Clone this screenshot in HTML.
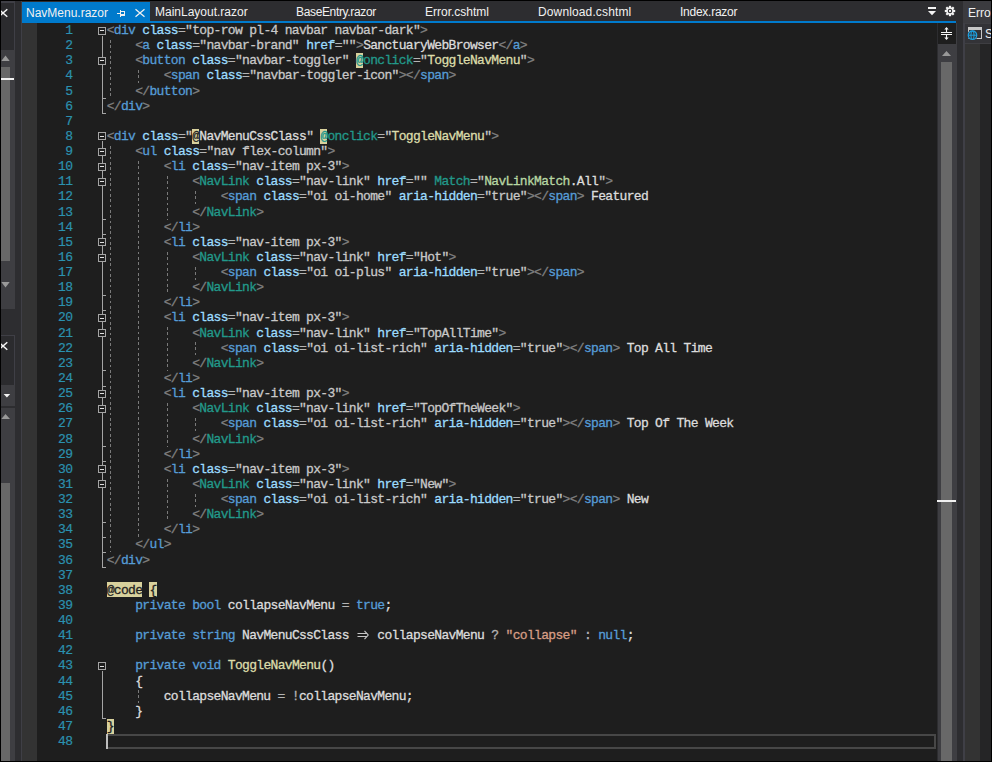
<!DOCTYPE html>
<html><head><meta charset="utf-8">
<style>
*{margin:0;padding:0;box-sizing:border-box}
html,body{width:992px;height:762px;overflow:hidden;background:#000}
body{position:relative;font-family:"Liberation Sans",sans-serif}
.abs{position:absolute}
/* left strip */
#lstrip{position:absolute;left:1px;top:1px;width:21px;height:760px;background:#2d2d30}
#lline{position:absolute;left:21px;top:1px;width:1px;height:760px;background:#3f3f46}
/* tab well */
#tabwell{position:absolute;left:22px;top:1px;width:941px;height:22px;background:#2d2d30}
#tabline{position:absolute;left:22px;top:21px;width:934px;height:2px;background:#007acc}
#acttab{position:absolute;left:22px;top:2px;width:128px;height:21px;background:#007acc}
.tab{position:absolute;top:5px;font-size:12px;color:#f1f1f1;white-space:pre;line-height:14px}
/* editor */
#margin{position:absolute;left:22px;top:23px;width:15px;height:738px;background:#333333}
#editor{position:absolute;left:37px;top:23px;width:900px;height:738px;background:#1e1e1e}
#vscroll{position:absolute;left:937px;top:23px;width:20px;height:738px;background:#3e3e42}
#rstrip{position:absolute;left:957px;top:1px;width:6px;height:760px;background:#2d2d30}
.num{-webkit-text-stroke:0.2px;position:absolute;left:37px;width:35.3px;text-align:right;font-family:"Liberation Mono",monospace;font-size:13.0px;letter-spacing:-0.680px;line-height:15.13px;height:15.13px;color:#2b91af;white-space:pre}
.ln{-webkit-text-stroke:0.3px;position:absolute;left:106.7px;font-family:"Liberation Mono",monospace;font-size:13.0px;letter-spacing:-0.680px;line-height:15.13px;height:15.13px;color:#dcdcdc;white-space:pre}
.d{color:#808080}.e{color:#569cd6}.a{color:#9cdcfe}.o{color:#b4b4b4}.v{color:#c8c8c8}.t{color:#dcdcdc}
.c{color:#22998a}.m{color:#dcdcaa}.n{color:#b8d7a3}.k{color:#569cd6}.s{color:#d69d85}
.ra{color:#15958c}.rb{color:#1e1e1e}
.yb{position:absolute;height:15px;background:#d8d19c}
.arr{position:relative;display:inline-block}
.ob{position:absolute;left:98px;width:8px;height:8px;border:1px solid #a5a5a5;background:#1e1e1e}
.ob i{position:absolute;left:1px;top:3px;width:4px;height:1px;background:#e0e0e0}
.ov{position:absolute;left:102px;width:1px;background:#a5a5a5}
.ot{position:absolute;left:102px;width:4px;height:1px;background:#a5a5a5}
.gd{position:absolute;width:1px;background:repeating-linear-gradient(to bottom,#7a7a7a 0,#7a7a7a 2.7px,transparent 2.7px,transparent 5.33px)}
#curline{position:absolute;left:106px;top:734px;width:830px;height:15px;border:2px solid #474747}
</style></head><body>
<div id="lstrip"></div>
<div id="lline"></div>
<!-- left panels -->
<div class="abs" style="left:1px;top:1px;width:14px;height:49px;background:#2b2b2e;border-top:2px solid #3f3f46;border-right:1px solid #3f3f46"></div>
<div class="abs" style="left:1px;top:50px;width:14px;height:259px;background:#3e3e42"></div>
<div class="abs" style="left:1px;top:67px;width:9px;height:194px;background:#686868"></div>
<div class="abs" style="left:1px;top:78px;width:13px;height:2px;background:#f0f0f0"></div>
<div class="abs" style="left:1px;top:335px;width:14px;height:50px;background:#2b2b2e;border-top:1px solid #3f3f46;border-right:1px solid #3f3f46"></div>
<div class="abs" style="left:1px;top:385px;width:14px;height:21px;background:#3e3e42"></div>
<div class="abs" style="left:1px;top:406px;width:13px;height:2px;background:#2d2d30"></div>
<div class="abs" style="left:1px;top:408px;width:14px;height:353px;background:#3e3e42"></div>
<div class="abs" style="left:1px;top:483px;width:9px;height:278px;background:#686868"></div>
<svg class="abs" style="left:1px;top:0" width="21" height="762">
 <path d="M-2.3 9.2L6.3 16.8M6.3 9.2L-2.3 16.8" stroke="#f4f4f4" stroke-width="1.5"/>
 <path d="M0.3 61L4.5 55.5L8.7 61Z" fill="#999"/>
 <path d="M0.3 282L4.5 287.5L8.7 282Z" fill="#999"/>
 <path d="M-2.3 342.2L6.3 349.8M6.3 342.2L-2.3 349.8" stroke="#f4f4f4" stroke-width="1.5"/>
 <path d="M2.6 394L9.2 394L5.9 397.6Z" fill="#f4f4f4"/>
 <path d="M0.3 419L4.5 414L9 419Z" fill="#999"/>
</svg>
<!-- tab well -->
<div id="tabwell"></div>
<div id="acttab"></div>
<div id="tabline"></div>
<div class="tab" style="left:26px;top:6px">NavMenu.razor</div>
<svg class="abs" style="left:110px;top:0px" width="40" height="22" shape-rendering="crispEdges">
 <rect x="7" y="13" width="3" height="1" fill="#f0f0f0"/>
 <rect x="10" y="10" width="1" height="7" fill="#f0f0f0"/>
 <rect x="10" y="11" width="5" height="1" fill="#f0f0f0"/>
 <rect x="14" y="11" width="1" height="5" fill="#f0f0f0"/>
 <rect x="10" y="14" width="5" height="2" fill="#f0f0f0"/>
</svg>
<svg class="abs" style="left:130px;top:0px" width="20" height="22">
 <path d="M5.5 9.3L14.5 16.7M14.5 9.3L5.5 16.7" stroke="#f0f0f0" stroke-width="1.3"/>
</svg>
<div class="tab" style="left:155px">MainLayout.razor</div>
<div class="tab" style="left:296px;letter-spacing:-0.35px">BaseEntry.razor</div>
<div class="tab" style="left:425px">Error.cshtml</div>
<div class="tab" style="left:538px;letter-spacing:0.13px">Download.cshtml</div>
<div class="tab" style="left:680px;letter-spacing:-0.25px">Index.razor</div>
<svg class="abs" style="left:920px;top:0px" width="40" height="22">
 <rect x="8" y="7" width="8" height="2" fill="#f4f4f4"/>
 <path d="M8 11H16L12 15.2Z" fill="#f4f4f4"/>
 <g transform="translate(30,11)" fill="#f4f4f4">
  <circle r="3.7"/>
  <g><rect x="-1.1" y="-5.2" width="2.2" height="2.4"/><rect x="-1.1" y="2.8" width="2.2" height="2.4"/><rect x="-5.2" y="-1.1" width="2.4" height="2.2"/><rect x="2.8" y="-1.1" width="2.4" height="2.2"/></g>
  <g transform="rotate(45)"><rect x="-1.1" y="-5.2" width="2.2" height="2.4"/><rect x="-1.1" y="2.8" width="2.2" height="2.4"/><rect x="-5.2" y="-1.1" width="2.4" height="2.2"/><rect x="2.8" y="-1.1" width="2.4" height="2.2"/></g>
  <circle r="1.7" fill="none" stroke="#2d2d30" stroke-width="1.1"/>
 </g>
</svg>
<!-- editor -->
<div id="margin"></div>
<div id="editor"></div>
<div id="vscroll"></div>
<div class="abs" style="left:937px;top:23px;width:1px;height:738px;background:#2d2d30"></div>
<div class="abs" style="left:938px;top:23px;width:18px;height:21px;background:#1e1e1e"></div>
<svg class="abs" style="left:937px;top:23px" width="20" height="21">
 <path d="M4 9.5H15M4 11.5H15" stroke="#f4f4f4" stroke-width="1.2"/>
 <path d="M9.5 5.5V9.5M9.5 11.5V15.5" stroke="#f4f4f4" stroke-width="1.1"/>
 <path d="M7.3 6.6L9.5 3.9L11.7 6.6ZM7.3 14.4L9.5 17.1L11.7 14.4Z" fill="#f4f4f4"/>
</svg>
<svg class="abs" style="left:937px;top:44px" width="20" height="20">
 <path d="M5 12H14L9.5 7Z" fill="#999"/>
</svg>
<div class="abs" style="left:941px;top:62px;width:11px;height:699px;background:#686868"></div>
<div class="abs" style="left:937px;top:500px;width:19px;height:2px;background:#f0f0f0"></div>
<div id="rstrip"></div>
<!-- right panel -->
<div class="abs" style="left:963px;top:1px;width:28px;height:22px;background:#3b3b3f"></div>
<div class="tab" style="left:968px;top:6px">Errors</div>
<div class="abs" style="left:963px;top:23px;width:2px;height:738px;background:#3f3f46"></div>
<div class="abs" style="left:965px;top:23px;width:26px;height:21px;background:#3e3e42"></div>
<div class="abs" style="left:965px;top:24px;width:26px;height:19px;background:#333337"></div>
<div class="abs" style="left:965px;top:44px;width:15px;height:717px;background:#333333"></div>
<div class="abs" style="left:980px;top:44px;width:11px;height:717px;background:#252526"></div>
<svg class="abs" style="left:963px;top:23px" width="28" height="21">
 <rect x="5.5" y="4.5" width="13" height="11" fill="none" stroke="#c8c8c8" stroke-width="1"/>
 <rect x="5" y="4" width="14" height="3" fill="#c8c8c8"/>
 <circle cx="9.5" cy="12.2" r="5.2" fill="#333337"/>
 <circle cx="9.5" cy="12.2" r="4.2" fill="none" stroke="#1ba1e2" stroke-width="1.3"/>
 <ellipse cx="9.5" cy="12.2" rx="1.6" ry="4.2" fill="none" stroke="#1ba1e2" stroke-width="1"/>
 <path d="M5.5 12.2H13.5" stroke="#1ba1e2" stroke-width="1"/>
</svg>
<div class="tab" style="left:985px;top:27px">S</div>
<div class="abs" style="left:991px;top:0;width:1px;height:762px;background:#000"></div>
<!-- gutter -->
<div class="num" style="top:23.00px">1</div>
<div class="num" style="top:38.13px">2</div>
<div class="num" style="top:53.26px">3</div>
<div class="num" style="top:68.39px">4</div>
<div class="num" style="top:83.52px">5</div>
<div class="num" style="top:98.65px">6</div>
<div class="num" style="top:113.78px">7</div>
<div class="num" style="top:128.91px">8</div>
<div class="num" style="top:144.04px">9</div>
<div class="num" style="top:159.17px">10</div>
<div class="num" style="top:174.30px">11</div>
<div class="num" style="top:189.43px">12</div>
<div class="num" style="top:204.56px">13</div>
<div class="num" style="top:219.69px">14</div>
<div class="num" style="top:234.82px">15</div>
<div class="num" style="top:249.95px">16</div>
<div class="num" style="top:265.08px">17</div>
<div class="num" style="top:280.21px">18</div>
<div class="num" style="top:295.34px">19</div>
<div class="num" style="top:310.47px">20</div>
<div class="num" style="top:325.60px">21</div>
<div class="num" style="top:340.73px">22</div>
<div class="num" style="top:355.86px">23</div>
<div class="num" style="top:370.99px">24</div>
<div class="num" style="top:386.12px">25</div>
<div class="num" style="top:401.25px">26</div>
<div class="num" style="top:416.38px">27</div>
<div class="num" style="top:431.51px">28</div>
<div class="num" style="top:446.64px">29</div>
<div class="num" style="top:461.77px">30</div>
<div class="num" style="top:476.90px">31</div>
<div class="num" style="top:492.03px">32</div>
<div class="num" style="top:507.16px">33</div>
<div class="num" style="top:522.29px">34</div>
<div class="num" style="top:537.42px">35</div>
<div class="num" style="top:552.55px">36</div>
<div class="num" style="top:567.68px">37</div>
<div class="num" style="top:582.81px">38</div>
<div class="num" style="top:597.94px">39</div>
<div class="num" style="top:613.07px">40</div>
<div class="num" style="top:628.20px">41</div>
<div class="num" style="top:643.33px">42</div>
<div class="num" style="top:658.46px">43</div>
<div class="num" style="top:673.59px">44</div>
<div class="num" style="top:688.72px">45</div>
<div class="num" style="top:703.85px">46</div>
<div class="num" style="top:718.98px">47</div>
<div class="num" style="top:734.11px">48</div>
<div class="gd" style="left:110px;top:39.7px;height:58.9px"></div>
<div class="gd" style="left:138px;top:70.0px;height:13.5px"></div>
<div class="gd" style="left:110px;top:145.6px;height:406.9px"></div>
<div class="gd" style="left:138px;top:160.8px;height:376.7px"></div>
<div class="gd" style="left:167px;top:175.9px;height:43.8px"></div>
<div class="gd" style="left:195px;top:191.0px;height:13.5px"></div>
<div class="gd" style="left:167px;top:251.6px;height:43.8px"></div>
<div class="gd" style="left:195px;top:266.7px;height:13.5px"></div>
<div class="gd" style="left:167px;top:327.2px;height:43.8px"></div>
<div class="gd" style="left:195px;top:342.3px;height:13.5px"></div>
<div class="gd" style="left:167px;top:402.9px;height:43.8px"></div>
<div class="gd" style="left:195px;top:418.0px;height:13.5px"></div>
<div class="gd" style="left:167px;top:478.5px;height:43.8px"></div>
<div class="gd" style="left:195px;top:493.6px;height:13.5px"></div>
<div class="gd" style="left:138px;top:690.3px;height:13.5px"></div>
<div class="ov" style="top:36px;height:78px"></div>
<div class="ot" style="top:113px"></div>
<div class="ov" style="top:66px;height:33px"></div>
<div class="ot" style="top:98px"></div>
<div class="ov" style="top:141px;height:427px"></div>
<div class="ot" style="top:567px"></div>
<div class="ov" style="top:157px;height:396px"></div>
<div class="ot" style="top:552px"></div>
<div class="ov" style="top:172px;height:63px"></div>
<div class="ot" style="top:234px"></div>
<div class="ov" style="top:187px;height:33px"></div>
<div class="ot" style="top:219px"></div>
<div class="ov" style="top:247px;height:64px"></div>
<div class="ot" style="top:310px"></div>
<div class="ov" style="top:263px;height:33px"></div>
<div class="ot" style="top:295px"></div>
<div class="ov" style="top:323px;height:64px"></div>
<div class="ot" style="top:386px"></div>
<div class="ov" style="top:338px;height:33px"></div>
<div class="ot" style="top:370px"></div>
<div class="ov" style="top:399px;height:63px"></div>
<div class="ot" style="top:461px"></div>
<div class="ov" style="top:414px;height:33px"></div>
<div class="ot" style="top:446px"></div>
<div class="ov" style="top:474px;height:64px"></div>
<div class="ot" style="top:537px"></div>
<div class="ov" style="top:489px;height:34px"></div>
<div class="ot" style="top:522px"></div>
<div class="ov" style="top:671px;height:48px"></div>
<div class="ot" style="top:718px"></div>
<div class="ob" style="top:27px"><i style="top:2px"></i></div>
<div class="ob" style="top:57px"><i style="top:2px"></i></div>
<div class="ob" style="top:132px"><i style="top:3px"></i></div>
<div class="ob" style="top:148px"><i style="top:2px"></i></div>
<div class="ob" style="top:163px"><i style="top:2px"></i></div>
<div class="ob" style="top:178px"><i style="top:2px"></i></div>
<div class="ob" style="top:238px"><i style="top:3px"></i></div>
<div class="ob" style="top:254px"><i style="top:2px"></i></div>
<div class="ob" style="top:314px"><i style="top:3px"></i></div>
<div class="ob" style="top:329px"><i style="top:3px"></i></div>
<div class="ob" style="top:390px"><i style="top:2px"></i></div>
<div class="ob" style="top:405px"><i style="top:2px"></i></div>
<div class="ob" style="top:465px"><i style="top:3px"></i></div>
<div class="ob" style="top:480px"><i style="top:3px"></i></div>
<div class="ob" style="top:662px"><i style="top:3px"></i></div>
<div class="yb" style="left:355.90px;top:53px;width:7.12px"></div>
<div class="yb" style="left:192.14px;top:129px;width:7.12px"></div>
<div class="yb" style="left:320.30px;top:129px;width:7.12px"></div>
<div class="yb" style="left:106.70px;top:582px;width:35.60px"></div>
<div class="yb" style="left:149.42px;top:582px;width:7.12px"></div>
<div class="yb" style="left:106.70px;top:719px;width:7.12px"></div>
<div id="curline"></div>
<div class="abs" style="left:106px;top:734px;width:2px;height:15px;background:#bdbdbd"></div>
<div class="ln" style="top:23.00px"><span class="d">&lt;</span><span class="e">div</span> <span class="a">class</span><span class="o">=</span><span class="v">"top-row pl-4 navbar navbar-dark"</span><span class="d">&gt;</span></div>
<div class="ln" style="top:38.13px">    <span class="d">&lt;</span><span class="e">a</span> <span class="a">class</span><span class="o">=</span><span class="v">"navbar-brand"</span> <span class="a">href</span><span class="o">=</span><span class="v">""</span><span class="d">&gt;</span><span class="t">SanctuaryWebBrowser</span><span class="d">&lt;/</span><span class="e">a</span><span class="d">&gt;</span></div>
<div class="ln" style="top:53.26px">    <span class="d">&lt;</span><span class="e">button</span> <span class="a">class</span><span class="o">=</span><span class="v">"navbar-toggler"</span> <span class="ra">@</span><span class="c">onclick</span><span class="o">=</span><span class="v">"</span><span class="m">ToggleNavMenu</span><span class="v">"</span><span class="d">&gt;</span></div>
<div class="ln" style="top:68.39px">        <span class="d">&lt;</span><span class="e">span</span> <span class="a">class</span><span class="o">=</span><span class="v">"navbar-toggler-icon"</span><span class="d">&gt;&lt;/</span><span class="e">span</span><span class="d">&gt;</span></div>
<div class="ln" style="top:83.52px">    <span class="d">&lt;/</span><span class="e">button</span><span class="d">&gt;</span></div>
<div class="ln" style="top:98.65px"><span class="d">&lt;/</span><span class="e">div</span><span class="d">&gt;</span></div>
<div class="ln" style="top:128.91px"><span class="d">&lt;</span><span class="e">div</span> <span class="a">class</span><span class="o">=</span><span class="v">"</span><span class="rb">@</span><span class="t">NavMenuCssClass</span><span class="v">"</span> <span class="ra">@</span><span class="c">onclick</span><span class="o">=</span><span class="v">"</span><span class="m">ToggleNavMenu</span><span class="v">"</span><span class="d">&gt;</span></div>
<div class="ln" style="top:144.04px">    <span class="d">&lt;</span><span class="e">ul</span> <span class="a">class</span><span class="o">=</span><span class="v">"nav flex-column"</span><span class="d">&gt;</span></div>
<div class="ln" style="top:159.17px">        <span class="d">&lt;</span><span class="e">li</span> <span class="a">class</span><span class="o">=</span><span class="v">"nav-item px-3"</span><span class="d">&gt;</span></div>
<div class="ln" style="top:174.30px">            <span class="d">&lt;</span><span class="c">NavLink</span> <span class="a">class</span><span class="o">=</span><span class="v">"nav-link"</span> <span class="a">href</span><span class="o">=</span><span class="v">""</span> <span class="c">Match</span><span class="o">=</span><span class="v">"</span><span class="n">NavLinkMatch</span><span class="t">.All</span><span class="v">"</span><span class="d">&gt;</span></div>
<div class="ln" style="top:189.43px">                <span class="d">&lt;</span><span class="e">span</span> <span class="a">class</span><span class="o">=</span><span class="v">"oi oi-home"</span> <span class="a">aria-hidden</span><span class="o">=</span><span class="v">"true"</span><span class="d">&gt;&lt;/</span><span class="e">span</span><span class="d">&gt;</span><span class="t"> Featured</span></div>
<div class="ln" style="top:204.56px">            <span class="d">&lt;/</span><span class="c">NavLink</span><span class="d">&gt;</span></div>
<div class="ln" style="top:219.69px">        <span class="d">&lt;/</span><span class="e">li</span><span class="d">&gt;</span></div>
<div class="ln" style="top:234.82px">        <span class="d">&lt;</span><span class="e">li</span> <span class="a">class</span><span class="o">=</span><span class="v">"nav-item px-3"</span><span class="d">&gt;</span></div>
<div class="ln" style="top:249.95px">            <span class="d">&lt;</span><span class="c">NavLink</span> <span class="a">class</span><span class="o">=</span><span class="v">"nav-link"</span> <span class="a">href</span><span class="o">=</span><span class="v">"Hot"</span><span class="d">&gt;</span></div>
<div class="ln" style="top:265.08px">                <span class="d">&lt;</span><span class="e">span</span> <span class="a">class</span><span class="o">=</span><span class="v">"oi oi-plus"</span> <span class="a">aria-hidden</span><span class="o">=</span><span class="v">"true"</span><span class="d">&gt;&lt;/</span><span class="e">span</span><span class="d">&gt;</span></div>
<div class="ln" style="top:280.21px">            <span class="d">&lt;/</span><span class="c">NavLink</span><span class="d">&gt;</span></div>
<div class="ln" style="top:295.34px">        <span class="d">&lt;/</span><span class="e">li</span><span class="d">&gt;</span></div>
<div class="ln" style="top:310.47px">        <span class="d">&lt;</span><span class="e">li</span> <span class="a">class</span><span class="o">=</span><span class="v">"nav-item px-3"</span><span class="d">&gt;</span></div>
<div class="ln" style="top:325.60px">            <span class="d">&lt;</span><span class="c">NavLink</span> <span class="a">class</span><span class="o">=</span><span class="v">"nav-link"</span> <span class="a">href</span><span class="o">=</span><span class="v">"TopAllTime"</span><span class="d">&gt;</span></div>
<div class="ln" style="top:340.73px">                <span class="d">&lt;</span><span class="e">span</span> <span class="a">class</span><span class="o">=</span><span class="v">"oi oi-list-rich"</span> <span class="a">aria-hidden</span><span class="o">=</span><span class="v">"true"</span><span class="d">&gt;&lt;/</span><span class="e">span</span><span class="d">&gt;</span><span class="t"> Top All Time</span></div>
<div class="ln" style="top:355.86px">            <span class="d">&lt;/</span><span class="c">NavLink</span><span class="d">&gt;</span></div>
<div class="ln" style="top:370.99px">        <span class="d">&lt;/</span><span class="e">li</span><span class="d">&gt;</span></div>
<div class="ln" style="top:386.12px">        <span class="d">&lt;</span><span class="e">li</span> <span class="a">class</span><span class="o">=</span><span class="v">"nav-item px-3"</span><span class="d">&gt;</span></div>
<div class="ln" style="top:401.25px">            <span class="d">&lt;</span><span class="c">NavLink</span> <span class="a">class</span><span class="o">=</span><span class="v">"nav-link"</span> <span class="a">href</span><span class="o">=</span><span class="v">"TopOfTheWeek"</span><span class="d">&gt;</span></div>
<div class="ln" style="top:416.38px">                <span class="d">&lt;</span><span class="e">span</span> <span class="a">class</span><span class="o">=</span><span class="v">"oi oi-list-rich"</span> <span class="a">aria-hidden</span><span class="o">=</span><span class="v">"true"</span><span class="d">&gt;&lt;/</span><span class="e">span</span><span class="d">&gt;</span><span class="t"> Top Of The Week</span></div>
<div class="ln" style="top:431.51px">            <span class="d">&lt;/</span><span class="c">NavLink</span><span class="d">&gt;</span></div>
<div class="ln" style="top:446.64px">        <span class="d">&lt;/</span><span class="e">li</span><span class="d">&gt;</span></div>
<div class="ln" style="top:461.77px">        <span class="d">&lt;</span><span class="e">li</span> <span class="a">class</span><span class="o">=</span><span class="v">"nav-item px-3"</span><span class="d">&gt;</span></div>
<div class="ln" style="top:476.90px">            <span class="d">&lt;</span><span class="c">NavLink</span> <span class="a">class</span><span class="o">=</span><span class="v">"nav-link"</span> <span class="a">href</span><span class="o">=</span><span class="v">"New"</span><span class="d">&gt;</span></div>
<div class="ln" style="top:492.03px">                <span class="d">&lt;</span><span class="e">span</span> <span class="a">class</span><span class="o">=</span><span class="v">"oi oi-list-rich"</span> <span class="a">aria-hidden</span><span class="o">=</span><span class="v">"true"</span><span class="d">&gt;&lt;/</span><span class="e">span</span><span class="d">&gt;</span><span class="t"> New</span></div>
<div class="ln" style="top:507.16px">            <span class="d">&lt;/</span><span class="c">NavLink</span><span class="d">&gt;</span></div>
<div class="ln" style="top:522.29px">        <span class="d">&lt;/</span><span class="e">li</span><span class="d">&gt;</span></div>
<div class="ln" style="top:537.42px">    <span class="d">&lt;/</span><span class="e">ul</span><span class="d">&gt;</span></div>
<div class="ln" style="top:552.55px"><span class="d">&lt;/</span><span class="e">div</span><span class="d">&gt;</span></div>
<div class="ln" style="top:582.81px"><span class="rb">@code</span> <span class="rb">{</span></div>
<div class="ln" style="top:597.94px">    <span class="k">private</span> <span class="k">bool</span> <span class="t">collapseNavMenu</span><span class="o"> = </span><span class="k">true</span><span class="t">;</span></div>
<div class="ln" style="top:628.20px">    <span class="k">private</span> <span class="k">string</span> <span class="t">NavMenuCssClass</span> <span class="arr">  <svg width="14" height="15" style="position:absolute;left:0;top:0" viewBox="0 0 14 15"><path d="M1.5 5.5H11.5M1.5 8.5H11.5M8.5 2.8L12.2 7L8.5 11.2" stroke="#c8c8c8" stroke-width="1.1" fill="none"/></svg></span> <span class="t">collapseNavMenu</span><span class="o"> ? </span><span class="s">"collapse"</span><span class="o"> : </span><span class="k">null</span><span class="t">;</span></div>
<div class="ln" style="top:658.46px">    <span class="k">private</span> <span class="k">void</span> <span class="m">ToggleNavMenu</span><span class="t">()</span></div>
<div class="ln" style="top:673.59px">    <span class="t">{</span></div>
<div class="ln" style="top:688.72px">        <span class="t">collapseNavMenu</span><span class="o"> = !</span><span class="t">collapseNavMenu</span><span class="t">;</span></div>
<div class="ln" style="top:703.85px">    <span class="t">}</span></div>
<div class="ln" style="top:718.98px"><span class="rb">}</span></div>
</body></html>
